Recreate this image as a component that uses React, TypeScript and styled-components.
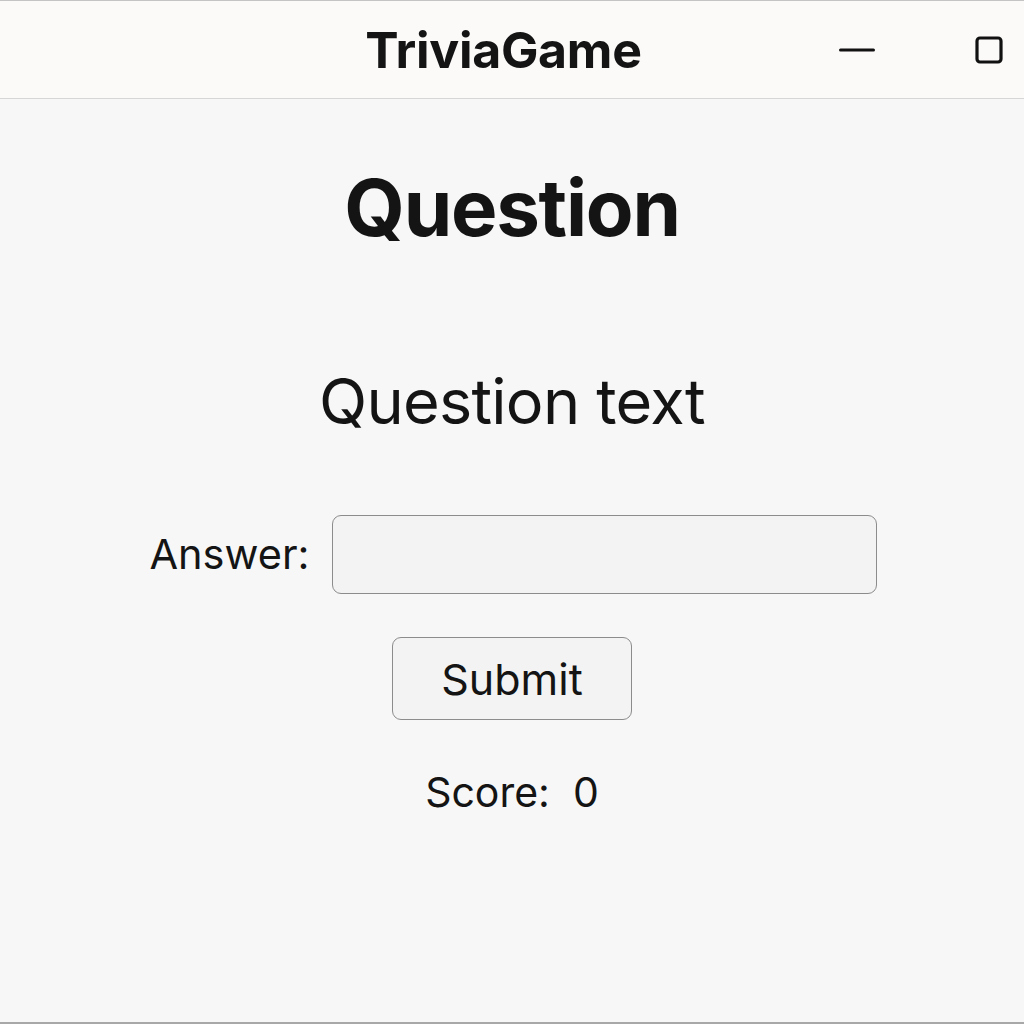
import React from "react";
import styled, { createGlobalStyle } from "styled-components";

const GlobalStyle = createGlobalStyle`
  html, body {
    margin: 0;
    padding: 0;
    background: #f7f7f7;
  }
  body {
    font-family: Inter, "Noto Sans", "Liberation Sans", sans-serif;
    color: #141414;
  }
`;

const Window = styled.div`
  width: 1024px;
  height: 1024px;
  box-sizing: border-box;
  border-top: 1px solid #c4c4c4;
  border-bottom: 2px solid #a8a8a8;
  background: #f7f7f7;
  display: flex;
  flex-direction: column;
`;

const TitleBar = styled.header`
  height: 98px;
  box-sizing: border-box;
  background: #fcf9f9;
  border-bottom: 1px solid #d6d6d6;
  display: grid;
  grid-template-columns: 1fr auto 1fr;
  align-items: center;
  padding: 0 17px 0 0;
`;

const Title = styled.h1`
  grid-column: 2;
  margin: 0;
  font-size: 50px;
  font-weight: 700;
  line-height: 1;
  letter-spacing: -0.3px;
  color: #141414;
`;

const Controls = styled.div`
  grid-column: 3;
  justify-self: end;
  display: flex;
  align-items: center;
  gap: 100px;
  margin-right: 4px;
`;

const IconButton = styled.span`
  display: flex;
  align-items: center;
  justify-content: center;
  color: #111;
`;

const Main = styled.main`
  flex: 1;
  display: flex;
  flex-direction: column;
  align-items: center;
  padding-top: 70px;
`;

const Heading = styled.h2`
  margin: 0;
  font-size: 78px;
  font-weight: 700;
  line-height: 1;
  letter-spacing: -1.25px;
`;

const QuestionText = styled.p`
  margin: 123px 0 0;
  font-size: 63px;
  font-weight: 400;
  line-height: 1;
  letter-spacing: -0.75px;
`;

const AnswerRow = styled.div`
  margin-top: 82px;
  display: flex;
  align-items: center;
  gap: 22px;
  transform: translateX(1px);
`;

const Label = styled.label`
  font-size: 41.5px;
  line-height: 1;
`;

const AnswerInput = styled.input`
  width: 545px;
  height: 79px;
  box-sizing: border-box;
  border: 1px solid #8c8c8c;
  border-radius: 9px;
  background: #f3f3f3;
  font-family: inherit;
  font-size: 36px;
  padding: 0 16px;
  outline: none;
`;

const SubmitButton = styled.button`
  margin-top: 43px;
  width: 240px;
  height: 83px;
  box-sizing: border-box;
  border: 1px solid #8c8c8c;
  border-radius: 9px;
  background: #f3f3f3;
  font-family: inherit;
  font-size: 43px;
  color: #141414;
  cursor: pointer;
`;

const Score = styled.p`
  margin: 52px 0 0;
  font-size: 41px;
  line-height: 1;
  white-space: pre;
`;

export default function App() {
  return (
    <>
      <GlobalStyle />
      <Window>
        <TitleBar>
          <Title>TriviaGame</Title>
          <Controls>
            <IconButton aria-label="Minimize">
              <svg width="36" height="6" viewBox="0 0 36 6">
                <line x1="1.5" y1="3" x2="34.5" y2="3" stroke="currentColor" strokeWidth="3" strokeLinecap="round" />
              </svg>
            </IconButton>
            <IconButton aria-label="Maximize">
              <svg width="28" height="28" viewBox="0 0 28 28">
                <rect x="2" y="2" width="24" height="24" rx="3" fill="none" stroke="currentColor" strokeWidth="3.2" />
              </svg>
            </IconButton>
          </Controls>
        </TitleBar>
        <Main>
          <Heading>Question</Heading>
          <QuestionText>Question text</QuestionText>
          <AnswerRow>
            <Label htmlFor="answer">Answer:</Label>
            <AnswerInput id="answer" type="text" />
          </AnswerRow>
          <SubmitButton>Submit</SubmitButton>
          <Score>{"Score:  0"}</Score>
        </Main>
      </Window>
    </>
  );
}
